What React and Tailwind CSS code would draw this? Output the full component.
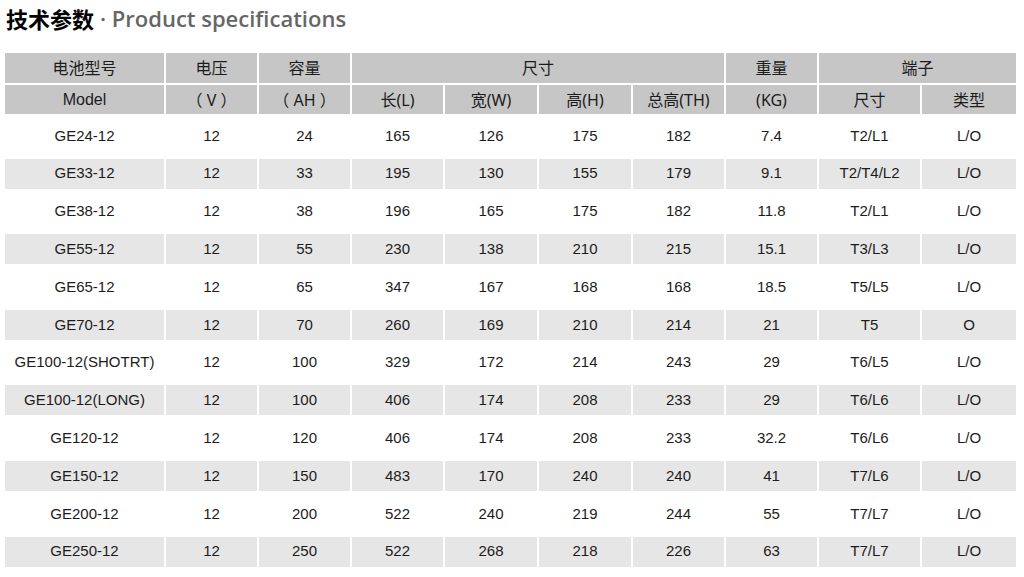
import React from 'react';

const cols = 'grid grid-cols-[159px_91px_91px_91px_92px_92px_91px_91px_101px_94px] gap-x-[2px]';

const rows = [
    ['GE24-12', '12', '24', '165', '126', '175', '182', '7.4', 'T2/L1', 'L/O'],
    ['GE33-12', '12', '33', '195', '130', '155', '179', '9.1', 'T2/T4/L2', 'L/O'],
    ['GE38-12', '12', '38', '196', '165', '175', '182', '11.8', 'T2/L1', 'L/O'],
    ['GE55-12', '12', '55', '230', '138', '210', '215', '15.1', 'T3/L3', 'L/O'],
    ['GE65-12', '12', '65', '347', '167', '168', '168', '18.5', 'T5/L5', 'L/O'],
    ['GE70-12', '12', '70', '260', '169', '210', '214', '21', 'T5', 'O'],
    ['GE100-12(SHOTRT)', '12', '100', '329', '172', '214', '243', '29', 'T6/L5', 'L/O'],
    ['GE100-12(LONG)', '12', '100', '406', '174', '208', '233', '29', 'T6/L6', 'L/O'],
    ['GE120-12', '12', '120', '406', '174', '208', '233', '32.2', 'T6/L6', 'L/O'],
    ['GE150-12', '12', '150', '483', '170', '240', '240', '41', 'T7/L6', 'L/O'],
    ['GE200-12', '12', '200', '522', '240', '219', '244', '55', 'T7/L7', 'L/O'],
    ['GE250-12', '12', '250', '522', '268', '218', '226', '63', 'T7/L7', 'L/O'],
];

const cjk = "font-['Noto_Sans','Noto_Sans_CJK_SC',sans-serif]";
const head = `bg-[#c6c6c6] flex items-center justify-center ${cjk}`;

export default function App() {
    return (
        <div className="w-[1024px] h-[577px] bg-white overflow-hidden">
            {/* title */}
            <div className="pl-[6px] pt-[3px] h-[53px] flex items-start">
                <span className="text-[22px] leading-[30px] font-bold text-black font-['Noto_Sans_CJK_SC',sans-serif]">技术参数</span>
                <span className="text-[22px] leading-[30px] font-semibold text-[#666] font-['Open_Sans',sans-serif] ml-[6px]">· Product specifications</span>
            </div>

            <div className="pl-[5px] text-[15px] text-[#1c1c1c] font-['Liberation_Sans','Noto_Sans_CJK_SC',sans-serif]">
                {/* header */}
                <div className={`${cols} h-[30px] text-[16px]`}>
                    <div className={head}>电池型号</div>
                    <div className={head}>电压</div>
                    <div className={head}>容量</div>
                    <div className={`${head} col-span-4`}>尺寸</div>
                    <div className={head}>重量</div>
                    <div className={`${head} col-span-2`}>端子</div>
                </div>
                <div className={`${cols} h-[29px] mt-[2px] text-[16px]`}>
                    <div className="bg-[#c6c6c6] flex items-center justify-center">Model</div>
                    <div className={head}>（ V ）</div>
                    <div className={head}>（ AH ）</div>
                    <div className={head}>长(L)</div>
                    <div className={head}>宽(W)</div>
                    <div className={head}>高(H)</div>
                    <div className={head}>总高(TH)</div>
                    <div className={head}>(KG)</div>
                    <div className={head}>尺寸</div>
                    <div className={head}>类型</div>
                </div>

                {/* body */}
                <div className="mt-[3px]">
                    {rows.map((r, i) => (
                        <div key={i} className="h-[37.8px] flex items-center">
                            <div className={`${cols} h-[30px]`}>
                                {r.map((c, j) => (
                                    <div
                                        key={j}
                                        className={`flex items-center justify-center ${i % 2 === 1 ? 'bg-[#e6e6e6]' : 'bg-white'}`}
                                    >
                                        {c}
                                    </div>
                                ))}
                            </div>
                        </div>
                    ))}
                </div>
            </div>
        </div>
    );
}
